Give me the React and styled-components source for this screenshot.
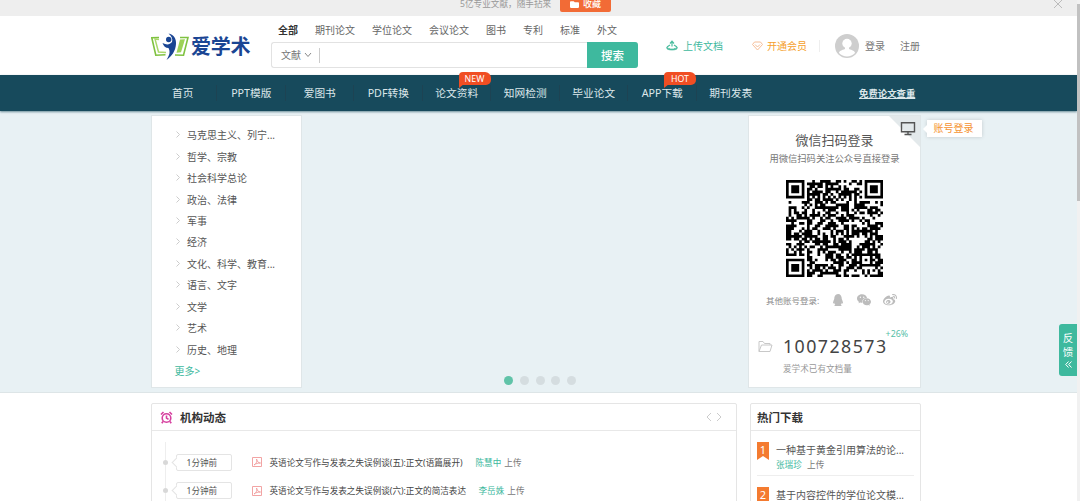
import React from "react";
import styled, { createGlobalStyle } from "styled-components";
import { FaQq, FaWeibo, FaFolder } from "react-icons/fa";
import { AiFillWechat } from "react-icons/ai";

const GlobalStyle = createGlobalStyle`
  * {
    box-sizing: border-box;
  }

  body {
    margin: 0;
    overflow: hidden;
    background: #fff;
    color: #555;
    font-family: "Noto Sans", "Noto Sans CJK SC", sans-serif;
    font-size: 10px;
  }
`;

const Window = styled.div`
  display: flex;
  height: 501px;
  overflow: hidden;
`;

const Page = styled.div`
  position: relative;
  width: 1077px;
  height: 501px;
  overflow: hidden;
`;

const Scrollbar = styled.div`
  width: 3px;
  background: #f1f1f1;
  padding-top: 4px;
`;

const Thumb = styled.div`
  height: 197px;
  background: #c1c1c1;
`;

const TopBar = styled.div`
  display: flex;
  height: 16px;
  padding-left: 460px;
  background: #eeeeee;
  color: #999;
  font-size: 9px;
  line-height: 8px;
`;

const Slogan = styled.span`
  width: 100px;
  font-size: 8.65px;
  white-space: nowrap;
`;

const Collect = styled.div`
  display: flex;
  align-items: center;
  justify-content: center;
  gap: 4px;
  width: 51px;
  height: 12px;
  padding-bottom: 4px;
  background: #f26b36;
  border-radius: 0 0 2px 2px;
  color: #fff;
  font-weight: 500;
`;

const CloseMark = styled.svg`
  width: 10px;
  height: 10px;
  margin: -1px 0 0 442px;
`;

const Header = styled.header`
  display: flex;
  height: 59px;
  padding-left: 151px;
`;

const Logo = styled.div`
  display: flex;
  align-items: center;
  width: 120px;
  padding-top: 3px;
  color: #1a4593;
  font-size: 20px;
  font-weight: 700;
  letter-spacing: -0.2px;
  line-height: 24px;

  svg {
    width: 38px;
    height: 28px;
    margin-right: 2px;
  }
`;

const SearchArea = styled.div`
  width: 367px;
  padding-top: 7px;
`;

const Tabs = styled.div`
  display: flex;
  gap: 17px;
  height: 19px;
  padding-left: 7px;
  line-height: 14px;
`;

const Tab = styled.span`
  color: ${(props) => (props.$active ? "#333" : "#666")};
  font-weight: ${(props) => (props.$active ? 700 : 400)};
`;

const SearchBox = styled.div`
  display: flex;
  align-items: center;
  height: 26px;
  padding-left: 9px;
  border: 1px solid #e2e2e2;
  border-right: 0;
  border-radius: 3px;
  color: #777;
  line-height: 14px;

  svg {
    width: 8px;
    height: 6px;
    margin-left: 3px;
  }
`;

const Caret = styled.i`
  width: 1px;
  height: 15px;
  margin-left: 7px;
  background: #ccc;
`;

const SearchButton = styled.button`
  width: 51px;
  height: 26px;
  margin-left: auto;
  padding: 0;
  border: 0;
  border-radius: 0 3px 3px 0;
  background: #3eb99e;
  color: #fff;
  font-family: inherit;
  font-size: 11.5px;
  font-weight: 500;
`;

const UserLinks = styled.div`
  display: flex;
  align-items: center;
  height: 59px;
  padding-left: 28px;
  line-height: 14px;
`;

const UserLink = styled.span`
  display: flex;
  align-items: center;
  gap: ${(props) => props.$gap || 0}px;
  margin-left: ${(props) => props.$left || 0}px;
  color: ${(props) => props.$color || "#777"};
`;

const Separator = styled.i`
  width: 1px;
  height: 12px;
  margin-left: ${(props) => props.$left}px;
  background: #eee;
`;

const Nav = styled.nav`
  position: relative;
  z-index: 1;
  display: flex;
  align-items: center;
  height: 36px;
  padding-left: 148.5px;
  background: #174a5c;
  box-shadow: 0 1px 2px rgba(23, 74, 92, 0.6);
  color: #dce7ea;
  font-size: 10.7px;
`;

const NavItem = styled.div`
  position: relative;
  width: 68.5px;
  text-align: center;
  line-height: 16px;
  white-space: nowrap;

  & + & {
    box-shadow: -1px 0 0 #1d4353;
  }
`;

const NavBadge = styled.span`
  position: absolute;
  top: -13px;
  left: 36px;
  width: 32px;
  height: 13px;
  border-radius: 4px 6px 5px 0;
  background: #f04e23;
  color: #fff;
  font-size: 8.8px;
  line-height: 14px;

  &::after {
    content: "";
    position: absolute;
    left: 0;
    top: 12px;
    border-top: 4px solid #f04e23;
    border-right: 5px solid transparent;
  }
`;

const CheckLink = styled.a`
  margin-left: 94px;
  font-size: 9.4px;
  font-weight: 700;
  text-decoration: underline;
`;

const Banner = styled.section`
  display: flex;
  height: 282px;
  padding: 4px 0 0 151px;
  border-bottom: 1px solid #dde5e7;
  background: #e8f1f4;
`;

const Categories = styled.div`
  width: 151px;
  height: 273px;
  padding: 8px 0 0 24px;
  background: #fff;
  border: 1px solid #dfe6e8;
`;

const Category = styled.div`
  display: flex;
  align-items: center;
  height: 21.45px;
  color: #555;

  svg {
    width: 4px;
    height: 7px;
    margin-right: 7px;
  }
`;

const More = styled.div`
  color: #3eb99e;
  line-height: 23px;
  margin-left: -1.5px;
`;

const Slider = styled.div`
  display: flex;
  align-items: flex-end;
  justify-content: center;
  gap: 6.7px;
  width: 447px;
  padding: 0 0 3px 29px;
  margin-bottom: 4px;
`;

const Dot = styled.i`
  width: 9px;
  height: 9px;
  border-radius: 50%;
  background: ${(props) => (props.$active ? "#60c3a8" : "#d5dde0")};
`;

const Login = styled.div`
  position: relative;
  display: flex;
  flex-direction: column;
  align-items: center;
  width: 173px;
  height: 273px;
  margin-left: -1px;
  padding-top: 15px;
  border: 1px solid #dfe6e8;
  background: #fff;
`;

const LoginTitle = styled.div`
  color: #555;
  font-size: 13px;
  line-height: 18px;
`;

const LoginHint = styled.div`
  margin-top: 2px;
  color: #777;
  font-size: 9.3px;
  line-height: 15px;
`;

const QrCode = styled.svg`
  width: 97px;
  height: 97px;
  margin-top: 13.500px;
`;

const Corner = styled.svg`
  position: absolute;
  top: 0;
  right: 0;
  width: 31px;
  height: 31px;
`;

const AccountTip = styled.div`
  position: absolute;
  top: 4px;
  left: 178px;
  width: 55px;
  height: 17px;
  background: #fff;
  box-shadow: 0 0 4px rgba(0, 0, 0, 0.16);
  color: #f59331;
  line-height: 17px;
  padding-right: 2px;
  text-align: center;

  &::before {
    content: "";
    position: absolute;
    top: 5px;
    left: -4px;
    border: solid transparent;
    border-width: 4px 4px 4px 0;
    border-right-color: #fff;
  }
`;

const OtherLogin = styled.div`
  display: flex;
  align-items: center;
  align-self: flex-start;
  height: 16px;
  margin: 15px 0 0 17px;
  color: #888;
  font-size: 8.5px;

  svg {
    color: #bcbcbc;
  }
`;

const SocialIcons = styled.span`
  display: flex;
  align-items: center;
  gap: 11.5px;
  margin-left: 13px;
`;

const Stats = styled.div`
  display: flex;
  align-self: stretch;
  margin-top: 22px;
  padding-left: 9px;
`;

const FolderIcon = styled.svg`
  width: 15px;
  height: 13px;
  margin-top: 10px;
`;

const StatText = styled.div`
  margin-left: 10px;
  color: #999;
  font-size: 8.6px;
`;

const Count = styled.div`
  height: 32px;
  color: #444;
  font-size: 17.8px;
  letter-spacing: 1.45px;
  line-height: 33px;
`;

const Growth = styled.span`
  margin-left: -2px;
  color: #55c0a8;
  font-size: 8.8px;
  line-height: 8px;
`;

const Bottom = styled.main`
  display: flex;
  gap: 13px;
  padding: 10px 0 0 151px;
`;

const Panel = styled.section`
  width: ${(props) => props.$width}px;
  height: 110px;
  border: 1px solid #e5e5e5;
  border-radius: 2px;
`;

const PanelHead = styled.div`
  display: flex;
  align-items: center;
  height: 27px;
  padding: 0 14px 0 ${(props) => props.$left}px;
  border-bottom: 1px solid #e8e8e8;
  color: #333;
  font-size: 11.5px;
  font-weight: 700;
`;

const AlarmIcon = styled.svg`
  width: 13px;
  height: 13px;
  margin-right: 7px;
`;

const Arrows = styled.svg`
  width: 16px;
  height: 10px;
  margin-left: auto;
`;

const Timeline = styled.div`
  display: flex;
  flex-direction: column;
  margin: 11px 0 0 12.500px;
  padding-top: 6px;
  border-left: 1px solid #eee;
`;

const NewsRow = styled.div`
  display: flex;
  align-items: center;
  height: 28.5px;
  font-size: 8.6px;
  white-space: nowrap;
`;

const Node = styled.i`
  width: 5px;
  height: 5px;
  margin-left: -3px;
  border-radius: 50%;
  background: #d8d8d8;
`;

const Time = styled.div`
  position: relative;
  width: 56px;
  height: 17px;
  margin-left: 8px;
  padding-left: 10px;
  border: 1px solid #e4e4e4;
  border-radius: 2px;
  line-height: 16px;

  &::before {
    content: "";
    position: absolute;
    top: 4px;
    left: -4px;
    width: 6px;
    height: 6px;
    border: solid #e4e4e4;
    border-width: 0 0 1px 1px;
    background: #fff;
    transform: rotate(45deg);
  }
`;

const PdfIcon = styled.svg`
  width: 10px;
  height: 10px;
  margin: 0 8px 0 20px;
`;

const NewsTitle = styled.span`
  color: #444;
  width: ${(props) => props.$width}px;
`;

const Author = styled.span`
  margin-right: 3px;
  color: #3eb99e;
`;

const Upload = styled.span`
  color: #777;
`;

const HotRow = styled.div`
  display: flex;
  height: 45px;
  margin: 0 6px;
  padding-top: 11px;
  border-bottom: 1px solid #eee;
`;

const Rank = styled.div`
  width: 12px;
  height: 18px;
  background: #f47b30;
  clip-path: polygon(0 0, 100% 0, 100% 100%, 50% 78%, 0 100%);
  color: #fff;
  font-size: 11px;
  line-height: 15px;
  text-align: center;
`;

const HotText = styled.div`
  margin-left: 7px;
  font-size: 10px;
  line-height: 17px;
  white-space: nowrap;
`;

const HotAuthor = styled.div`
  font-size: 8.6px;
  line-height: 13px;
`;

const Feedback = styled.div`
  position: absolute;
  top: 324px;
  right: 0;
  width: 18px;
  height: 52px;
  padding-top: 7px;
  border-radius: 3px 0 0 3px;
  background: #3eb99e;
  color: #fff;
  font-size: 10.5px;
  line-height: 14px;
  text-align: center;

  svg {
    display: block;
    width: 7px;
    height: 7px;
    margin: 2px auto 0;
  }
`;

const tabs = ["全部", "期刊论文", "学位论文", "会议论文", "图书", "专利", "标准", "外文"];

const navItems = [
  { label: "首页" },
  { label: "PPT模版" },
  { label: "爱图书" },
  { label: "PDF转换" },
  { label: "论文资料", badge: "NEW" },
  { label: "知网检测" },
  { label: "毕业论文" },
  { label: "APP下载", badge: "HOT" },
  { label: "期刊发表" },
];

const categories = [
  "马克思主义、列宁...",
  "哲学、宗教",
  "社会科学总论",
  "政治、法律",
  "军事",
  "经济",
  "文化、科学、教育...",
  "语言、文字",
  "文学",
  "艺术",
  "历史、地理",
];

const news = [
  { title: "英语论文写作与发表之失误例谈(五):正文(语篇展开)", author: "陈慧中", width: 206 },
  { title: "英语论文写作与发表之失误例谈(六):正文的简洁表达", author: "李岳姝", width: 209 },
];

const hot = [
  { title: "一种基于黄金引用算法的论...", author: "张瑞珍" },
  { title: "基于内容控件的学位论文模...", author: "" },
];

const QR_SIZE = 37;

// finder and alignment squares: distance from the centre decides the ring
const ring = (x, y, cx, cy) => Math.max(Math.abs(x - cx), Math.abs(y - cy));

const isDark = (x, y, random) => {
  const far = QR_SIZE - 4;
  for (const [cx, cy] of [[3, 3], [far, 3], [3, far]]) {
    const d = ring(x, y, cx, cy);
    if (d <= 4) return d !== 4 && d !== 2;
  }
  const a = ring(x, y, 30, 30);
  if (a <= 2) return a !== 1;
  if (x === 6 || y === 6) return (x + y) % 2 === 0;
  return random > 0.46;
};

const buildQr = () => {
  let seed = 20177;
  let d = "";
  for (let y = 0; y < QR_SIZE; y++) {
    for (let x = 0; x < QR_SIZE; x++) {
      seed = (seed * 16807) % 2147483647;
      if (isDark(x, y, seed / 2147483647)) d += `M${x} ${y}h1.03v1.03h-1.03z`;
    }
  }
  return d;
};

const qrPath = buildQr();

function LogoMark() {
  return (
    <svg viewBox="0 0 38 28" fill="none">
      <path d="M8 4.500.8 4.800l4 17.400 9.700-.4" stroke="#7fc241" strokeWidth="1.600" />
      <path d="M8 6.500 4 6l3.500 13 7.500.5" stroke="#a9d86a" strokeWidth="1.500" />
      <path d="M29 4.500h8l-4.500 17.800-8.500-.3" stroke="#7fc241" strokeWidth="1.600" />
      <path d="m29 6.500 5-.2-4 13-4.500.5z" fill="#9dd257" />
      <circle cx="17.700" cy="6.500" r="2.700" fill="#1a4593" />
      <path d="M11.500 10c4 2 7 2 9.500-1 1-3-.5-6-3.500-8.500 5 1 8 5 7.500 10.500-.5 7-4 12-9.500 16 3-5 4-8 2-12-3 0-5-2-6-5z" fill="#1a4593" />
    </svg>
  );
}

function TopHeader() {
  return (
    <Header>
      <Logo>
        <LogoMark />
        爱学术
      </Logo>
      <SearchArea>
        <Tabs>
          {tabs.map((tab, index) => (
            <Tab key={tab} $active={index === 0}>{tab}</Tab>
          ))}
        </Tabs>
        <SearchBox>
          文献
          <svg viewBox="0 0 8 6" fill="none" stroke="#888">
            <path d="m1 1 3 3.500L7 1" />
          </svg>
          <Caret />
          <SearchButton>搜索</SearchButton>
        </SearchBox>
      </SearchArea>
      <UserLinks>
        <UserLink $color="#3eb99e" $gap={5}>
          <svg width="12" height="11" viewBox="0 0 12 11" fill="none" stroke="#4cbd9f" strokeWidth="1.200">
            <path d="M6 6.500V1.800M4 3.500 6 1.200 8 3.500M4 5 1 7M8 5l3 2" />
            <path d="M.8 7c1 2 3 1 3.700 2h3c.7-1 2.700 0 3.700-2v1.500c-1 2-9.400 2-10.400 0z" fill="#4cbd9f" strokeWidth="0.700" />
          </svg>
          上传文档
        </UserLink>
        <UserLink $color="#f5a02c" $left={29} $gap={4}>
          <svg width="11" height="10" viewBox="0 0 11 10" fill="none" stroke="#f6bd96">
            <path d="M2.500 1h6L10.500 3.500 5.500 9 .5 3.500zM3 3.500 5.500 6 8 3.500" />
          </svg>
          开通会员
        </UserLink>
        <Separator $left={12} />
        <UserLink $left={15} $gap={6}>
          <svg width="24" height="24" viewBox="0 0 24 24">
            <circle cx="12" cy="12" r="12" fill="#cecece" />
            <circle cx="12" cy="9.500" r="4.700" fill="#fff" />
            <path d="M10 12h4v3c3 1 6 2 6 4a11 11 0 0 1-16 0c0-2 3-3 6-4z" fill="#fff" />
          </svg>
          登录
        </UserLink>
        <UserLink $left={15}>注册</UserLink>
      </UserLinks>
    </Header>
  );
}

function LoginCard() {
  return (
    <Login>
      <Corner viewBox="0 0 31 31">
        <path d="M0 0h31v31z" fill="#e3e9eb" />
        <g fill="none" stroke="#555" strokeWidth="1.400">
          <path d="M12.500 6.700h13v9h-13zM19 16v3M15.500 18.500h7" />
        </g>
      </Corner>
      <AccountTip>账号登录</AccountTip>
      <LoginTitle>微信扫码登录</LoginTitle>
      <LoginHint>用微信扫码关注公众号直接登录</LoginHint>
      <QrCode viewBox={`0 0 ${QR_SIZE} ${QR_SIZE}`}>
        <path d={qrPath} />
      </QrCode>
      <OtherLogin>
        其他账号登录:
        <SocialIcons>
          <FaQq size={12} />
          <AiFillWechat size={16} />
          <FaWeibo size={14} />
        </SocialIcons>
      </OtherLogin>
      <Stats>
        <FolderIcon viewBox="0 0 15 13" fill="none" stroke="#c8c8c8">
          <path d="M1 11.500V1.500h4l1.500 2H12V5M1 11.500 3.500 5H14l-2 6.500z" />
        </FolderIcon>
        <StatText>
          <Count>100728573</Count>
          爱学术已有文档量
        </StatText>
        <Growth>+26%</Growth>
      </Stats>
    </Login>
  );
}

function NewsPanel() {
  return (
    <Panel $width={586}>
      <PanelHead $left={8}>
        <AlarmIcon viewBox="0 0 13 13" fill="none" stroke="#d6409f" strokeWidth="1.600">
          <circle cx="6.500" cy="7" r="4.300" />
          <path d="M6.500 4.500V7l2 1.300M1 3.500 3.500 1M12 3.500 9.500 1M3 10.500 1.800 12.300M10 10.500l1.200 1.800" />
        </AlarmIcon>
        机构动态
        <Arrows viewBox="0 0 16 10" fill="none" stroke="#ccc">
          <path d="M5 1 1 5l4 4M11 1l4 4-4 4" />
        </Arrows>
      </PanelHead>
      <Timeline>
        {news.map((item) => (
          <NewsRow key={item.author}>
            <Node />
            <Time>1分钟前</Time>
            <PdfIcon viewBox="0 0 10 10" fill="none" stroke="#f19a9a" strokeWidth="0.900">
              <path d="M.5.5h9v9h-9zM2 8c3-2 3-4 2.500-6 1 3 2 4 4 4C6 6 4 6.500 2 8z" />
            </PdfIcon>
            <NewsTitle $width={item.width}>{item.title}</NewsTitle>
            <Author>{item.author}</Author>
            <Upload>上传</Upload>
          </NewsRow>
        ))}
      </Timeline>
    </Panel>
  );
}

function HotPanel() {
  return (
    <Panel $width={171}>
      <PanelHead $left={6}>热门下载</PanelHead>
      {hot.map((item, index) => (
        <HotRow key={item.title}>
          <Rank>{index + 1}</Rank>
          <HotText>
            {item.title}
            {item.author && (
              <HotAuthor>
                <Author>{item.author}</Author> <Upload>上传</Upload>
              </HotAuthor>
            )}
          </HotText>
        </HotRow>
      ))}
    </Panel>
  );
}

function App() {
  return (
    <Window>
      <GlobalStyle />
      <Page>
        <TopBar>
          <Slogan>5亿专业文献，随手拈来</Slogan>
          <Collect>
            <FaFolder size={9} />
            收藏
          </Collect>
          <CloseMark viewBox="0 0 10 10" stroke="#bbb">
            <path d="m1 1 8 8M9 1 1 9" />
          </CloseMark>
        </TopBar>
        <TopHeader />
        <Nav>
          {navItems.map((item) => (
            <NavItem key={item.label}>
              {item.label}
              {item.badge && <NavBadge>{item.badge}</NavBadge>}
            </NavItem>
          ))}
          <CheckLink>免费论文查重</CheckLink>
        </Nav>
        <Banner>
          <Categories>
            {categories.map((name) => (
              <Category key={name}>
                <svg viewBox="0 0 4 7" fill="none" stroke="#ccc">
                  <path d="m.5.5 3 3-3 3" />
                </svg>
                {name}
              </Category>
            ))}
            <More>更多&gt;</More>
          </Categories>
          <Slider>
            {[0, 1, 2, 3, 4].map((i) => (
              <Dot key={i} $active={i === 0} />
            ))}
          </Slider>
          <LoginCard />
        </Banner>
        <Bottom>
          <NewsPanel />
          <HotPanel />
        </Bottom>
        <Feedback>
          反
          <br />
          馈
          <svg viewBox="0 0 7 7" fill="none" stroke="#fff">
            <path d="M3.500.5.7 3.500l2.800 3M6.500.5 3.700 3.500l2.800 3" />
          </svg>
        </Feedback>
      </Page>
      <Scrollbar>
        <Thumb />
      </Scrollbar>
    </Window>
  );
}

export default App;
